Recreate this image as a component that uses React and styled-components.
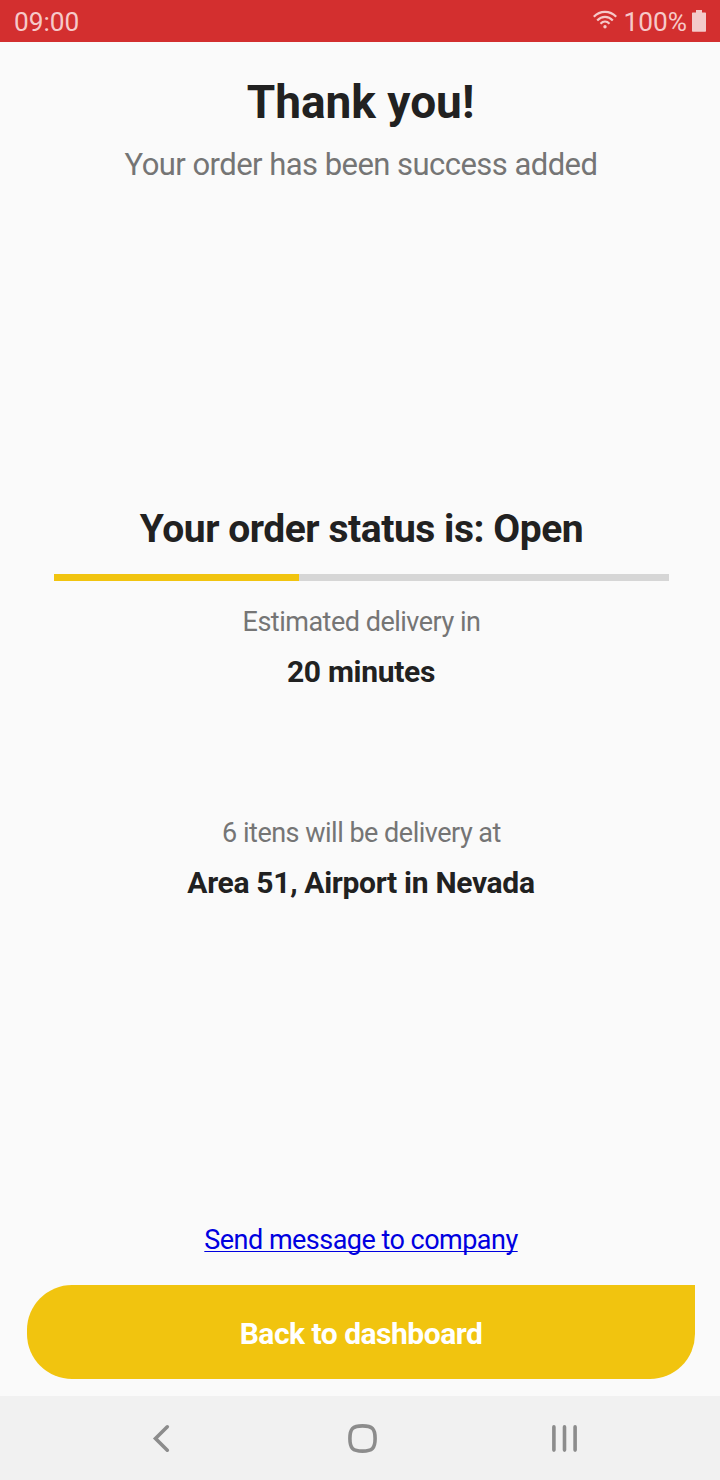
import React from "react";
import styled, { createGlobalStyle } from "styled-components";

const GlobalStyle = createGlobalStyle`
  * { box-sizing: border-box; }
  body { margin: 0; background: #fafafa; }
`;

const Screen = styled.div`
  display: flex;
  flex-direction: column;
  width: 720px;
  height: 1480px;
  background: #fafafa;
  color: #212121;
  font-family: Roboto, sans-serif;
  overflow: hidden;
`;

const StatusBar = styled.header`
  display: flex;
  align-items: center;
  justify-content: space-between;
  height: 42px;
  padding: 2px 13px 0 14px;
  background: #d32f2f;
  color: #f6c9c9;
  font-size: 26.25px;
  line-height: 40px;
`;

const StatusIcons = styled.div`
  display: flex;
  align-items: center;
  height: 40px;
`;

const WifiIcon = styled.svg`
  display: block;
  margin: -5px 7px 0 0;
`;

const BatteryIcon = styled.svg`
  display: block;
  margin: -3px 0 0 5px;
`;

const Content = styled.main`
  display: flex;
  flex-direction: column;
  flex: 1;
  padding: 32px 25px 17px 27px;
  text-align: center;
`;

const Title = styled.h1`
  margin: 0;
  padding-right: 1px;
  font-size: 46px;
  line-height: 56px;
  font-weight: 700;
`;

const Subtitle = styled.p`
  margin: 16px 0 0;
  padding-top: 1px;
  color: #757575;
  font-size: 31px;
  line-height: 36px;
  letter-spacing: -0.54px;
`;

const OrderStatus = styled.section`
  margin-top: 323px;
`;

const StatusHeading = styled.h2`
  margin: 0;
  padding-left: 1px;
  font-size: 39px;
  line-height: 46px;
  font-weight: 700;
  letter-spacing: -0.46px;
`;

const ProgressTrack = styled.div`
  height: 7px;
  margin: 22px 26px 25px 27px;
  background: #d6d6d6;
`;

const ProgressFill = styled.div`
  height: 100%;
  background: #f1c40f;
`;

const Detail = styled.section`
  margin-top: ${(p) => p.$gap || 0}px;
`;

const Caption = styled.p`
  margin: 0 0 16px;
  padding-left: 1px;
  color: #757575;
  font-size: 27px;
  line-height: 32px;
  letter-spacing: -0.5px;
`;

const Value = styled.p`
  margin: 0;
  font-size: 30px;
  line-height: 36px;
  font-weight: 700;
  letter-spacing: -0.31px;
`;

const Actions = styled.footer`
  display: flex;
  flex-direction: column;
  align-items: center;
  gap: 29px;
  margin-top: auto;
`;

const MessageLink = styled.a`
  color: #0000e0;
  font-size: 27px;
  line-height: 32px;
  text-decoration: underline;
  text-decoration-thickness: 1px;
  text-underline-offset: 2px;
  text-decoration-skip-ink: none;
  letter-spacing: -0.52px;
`;

const DashboardButton = styled.button`
  width: 100%;
  height: 94px;
  padding: 4px 0 0;
  border: 0;
  border-radius: 45px 0 45px 45px;
  background: #f1c40f;
  color: #fff;
  font: 700 30px/36px Roboto, sans-serif;
  letter-spacing: -0.5px;
`;

const NavBar = styled.nav`
  display: flex;
  align-items: center;
  justify-content: space-between;
  height: 84px;
  padding: 0 140px 0 146px;
  background: #f1f1f1;
`;

const NavIcon = styled.svg`
  display: block;
  fill: none;
  stroke: #8c8c8c;
  stroke-width: 3.6;
  stroke-linecap: round;
`;

const PROGRESS = 39.8;

export default function App() {
  return (
    <>
      <GlobalStyle />
      <Screen>
        <StatusBar>
          <span>09:00</span>
          <StatusIcons>
            <WifiIcon width="24" height="20" viewBox="0 0 24 20" fill="none" stroke="#f6c9c9" strokeWidth="2.2" strokeLinecap="butt">
              <path d="M.8 6.8C7 .2 17 .2 23.2 6.8" />
              <path d="M4.2 10.4C8.8 5.6 15.2 5.6 19.8 10.4" />
              <path d="M7.5 13.7C10.2 11 13.8 11 16.5 13.7" />
              <circle cx="12" cy="16.7" r="1.7" fill="#f6c9c9" stroke="none" />
            </WifiIcon>
            <span>100%</span>
            <BatteryIcon width="15" height="22" viewBox="0 0 15 22" fill="#f3caca">
              <path d="M4 0h6v2.5h3.3a.7.7 0 0 1 .7.7V21a.7.7 0 0 1-.7.7H.7A.7.7 0 0 1 0 21V3.2a.7.7 0 0 1 .7-.7H4z" />
            </BatteryIcon>
          </StatusIcons>
        </StatusBar>

        <Content>
          <Title>Thank you!</Title>
          <Subtitle>Your order has been success added</Subtitle>

          <OrderStatus>
            <StatusHeading>Your order status is: Open</StatusHeading>
            <ProgressTrack>
              <ProgressFill style={{ width: `${PROGRESS}%` }} />
            </ProgressTrack>
          </OrderStatus>
          <Detail>
            <Caption>Estimated delivery in</Caption>
            <Value>20 minutes</Value>
          </Detail>
          <Detail $gap={127}>
            <Caption>6 itens will be delivery at</Caption>
            <Value>Area 51, Airport in Nevada</Value>
          </Detail>

          <Actions>
            <MessageLink href="#">Send message to company</MessageLink>
            <DashboardButton type="button">Back to dashboard</DashboardButton>
          </Actions>
        </Content>

        <NavBar>
          <NavIcon width="30" height="30" viewBox="0 0 30 30" strokeLinejoin="miter">
            <path d="M21.3 3.8 9.5 15.5 21.3 27.2" />
          </NavIcon>
          <NavIcon width="30" height="30" viewBox="0 0 30 30">
            <path d="M14.5 2.9C24.3 2.9 27.1 5.7 27.1 15.5S24.3 28.1 14.5 28.1 1.9 25.3 1.9 15.5 4.7 2.9 14.5 2.9z" />
          </NavIcon>
          <NavIcon width="30" height="30" viewBox="0 0 30 30">
            <path d="M3.9 3.9v23.2M14.5 3.9v23.2M25.1 3.9v23.2" />
          </NavIcon>
        </NavBar>
      </Screen>
    </>
  );
}
